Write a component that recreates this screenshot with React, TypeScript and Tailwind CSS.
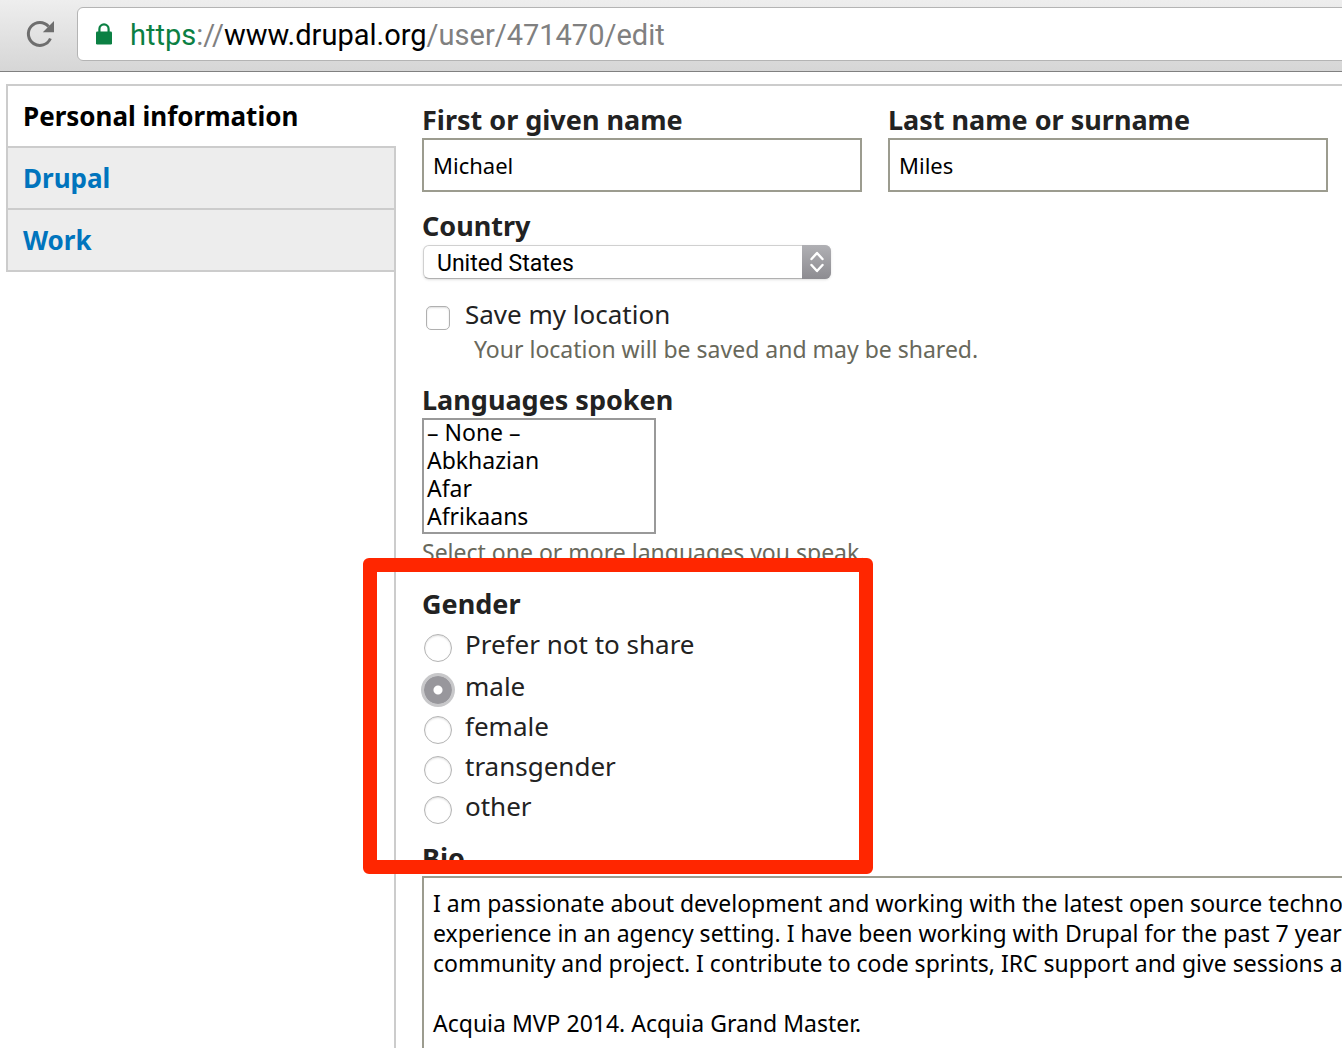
import type { ReactNode } from 'react';

const bio = `I am passionate about development and working with the latest open source technologies
experience in an agency setting. I have been working with Drupal for the past 7 years
community and project. I contribute to code sprints, IRC support and give sessions at

Acquia MVP 2014. Acquia Grand Master.`;

const genders = ['Prefer not to share', 'male', 'female', 'transgender', 'other'];

function Toolbar() {
  return (
    <header className="flex h-[72px] items-start overflow-hidden border-b border-[#808080] bg-linear-to-b from-[#eeeeee] to-[#d6d6d6] pt-[7px]">
      <button type="button" aria-label="Reload" className="ml-6 mt-3 h-8 w-8 shrink-0">
        <svg viewBox="0 0 32 32" className="h-8 w-8" fill="none">
          <path d="M26.400 19.500A11.500 11.500 0 1 1 24.600 7.400" stroke="#6e6e6e" strokeWidth="3" />
          <path d="M30 2v11.200H18.800z" fill="#6e6e6e" />
        </svg>
      </button>
      <div className="-mr-2 ml-[21px] flex h-[54px] flex-1 items-center rounded-md border border-[#b4b4b4] bg-white pl-[18px]">
        <svg viewBox="0 0 16 22" className="h-[22px] w-4 shrink-0" fill="none">
          <path d="M3.400 9.500V6a4.600 4.600 0 0 1 9.200 0v3.500" stroke="#0b8043" strokeWidth="2.200" />
          <rect y="8.500" width="16" height="13" rx="1.200" fill="#0b8043" />
        </svg>
        <a href="#url" className="ml-[18px] pt-0.5 font-['Roboto',sans-serif] text-[29px] leading-[52px] whitespace-nowrap text-[#808080]">
          <span className="text-[#0b8043]">https</span>://<span className="text-black">www.drupal.org</span>/user/471470/edit
        </a>
      </div>
    </header>
  );
}

function Tab({ active, children }: { active?: boolean; children: ReactNode }) {
  return (
    <a
      href="#tab"
      className={
        active
          ? 'block h-[62px] border-b-2 border-[#cccccc] bg-white pl-[15px] leading-[60px] text-black'
          : 'block h-[62px] border-r-2 border-b-2 border-[#cccccc] bg-[#ededed] pl-[15px] leading-[60px] text-[#0074bd]'
      }
    >
      {children}
    </a>
  );
}

function Label({ htmlFor, children }: { htmlFor: string; children: ReactNode }) {
  return (
    <label htmlFor={htmlFor} className="block pb-0.5 text-[27px] leading-8 font-bold">
      {children}
    </label>
  );
}

function TextField({ id, label, value }: { id: string; label: string; value: string }) {
  return (
    <div className="min-w-0">
      <Label htmlFor={id}>{label}</Label>
      <input id={id} type="text" defaultValue={value} className="block h-[54px] w-full border-2 border-[#9c9c8f] bg-white px-[9px] text-[22px] text-black outline-none" />
    </div>
  );
}

export default function App() {
  return (
    <div className="flex min-h-screen flex-col overflow-hidden bg-white font-['Noto_Sans',sans-serif] text-[#222222]">
      <Toolbar />
      <main className="mt-3 ml-1.5 flex flex-1 border-t-2 border-[#cccccc]">
        <nav className="z-10 -mr-0.5 w-[390px] shrink-0 self-start border-l-2 border-[#cccccc] text-[26px] font-bold">
          <Tab active>Personal information</Tab>
          <Tab>Drupal</Tab>
          <Tab>Work</Tab>
        </nav>
        <form className="flex min-w-0 flex-1 flex-col border-l-2 border-[#cccccc] pt-[18px] pl-[26px]">
          <div className="grid grid-cols-2 gap-[26px] pr-3.5">
            <TextField id="first" label="First or given name" value="Michael" />
            <TextField id="last" label="Last name or surname" value="Miles" />
          </div>

          <div className="mt-[18px]">
            <Label htmlFor="country">Country</Label>
            <div className="relative ml-px mt-px w-[408px]">
              <select id="country" className="block h-[34px] w-full appearance-none rounded-md border border-[#d0d0d0] border-b-[#b0b0b0] bg-white pt-0.5 pl-[13px] font-['Roboto',sans-serif] text-[23px] leading-8 text-black shadow-sm outline-none">
                <option>United States</option>
              </select>
              <span className="pointer-events-none absolute inset-y-0 right-0 flex w-[29px] items-center justify-center rounded-r-md bg-linear-to-b from-[#b0b0b4] to-[#8d8c91]">
                <svg viewBox="0 0 14 22" className="h-[22px] w-3.5" fill="none" stroke="#ffffff" strokeWidth="2.400" strokeLinecap="round" strokeLinejoin="round">
                  <path d="M1.500 8 7 2l5.500 6M1.500 14 7 20l5.500-6" />
                </svg>
              </span>
            </div>
          </div>

          <div className="mt-[18px] flex h-9">
            <input id="save" type="checkbox" className="mt-[9px] ml-1 h-6 w-6 shrink-0 appearance-none rounded-[5px] border border-[#b0b0b0] bg-white shadow-[inset_0_1px_2px_#dddddd] outline-none" />
            <label htmlFor="save" className="ml-[15px] text-[26px] leading-[34px]">Save my location</label>
          </div>
          <p className="pb-0.5 pl-[52px] text-[23px] leading-8 text-[#68685b]">Your location will be saved and may be shared.</p>

          <div className="mt-[17px]">
            <Label htmlFor="languages">Languages spoken</Label>
            <select id="languages" multiple size={4} className="block h-[116px] w-[234px] overflow-hidden rounded-none border-2 border-[#999999] bg-white p-0 text-[23px] text-black outline-none [scrollbar-width:none]">
              {['– None –', 'Abkhazian', 'Afar', 'Afrikaans'].map((name) => (
                <option key={name} className="flex h-7 min-h-7 items-center px-[3px] pt-0 pb-1 leading-6">{name}</option>
              ))}
            </select>
            <p className="mt-0.5 pb-0.5 text-[23px] leading-8 text-[#68685b]">Select one or more languages you speak.</p>
          </div>

          <fieldset className="relative mt-[18px]">
            <legend className="mb-[3px] block pb-0.5 text-[27px] leading-8 font-bold">Gender</legend>
            {genders.map((name) => (
              <div key={name} className="flex h-10 first-of-type:mb-0.5">
                {name === 'male' ? (
                  <input id={name} type="radio" name="gender" defaultChecked className="mt-[9px] ml-0.5 h-7 w-7 shrink-0 appearance-none rounded-full bg-[radial-gradient(circle,#ffffff_4px,#98979c_5px)] ring-3 ring-[#c8c8ca] outline-none" />
                ) : (
                  <input id={name} type="radio" name="gender" className="mt-[9px] ml-0.5 h-7 w-7 shrink-0 appearance-none rounded-full border border-[#b4b4b4] bg-white shadow-[inset_0_1px_2px_#dddddd] outline-none" />
                )}
                <label htmlFor={name} className="ml-[13px] text-[26px] leading-[38px]">{name}</label>
              </div>
            ))}
            <div className="pointer-events-none absolute -top-[67px] -left-[59px] h-[316px] w-[510px] rounded-md border-[14px] border-[#ff2600]" />
          </fieldset>

          <div className="mt-[15px] flex flex-1 flex-col">
            <Label htmlFor="bio">Bio</Label>
            <textarea id="bio" wrap="off" defaultValue={bio} className="-mr-1 block min-h-[172px] flex-1 resize-none overflow-hidden border-2 border-b-0 border-[#9c9c8f] bg-white px-[9px] pt-2.5 text-[23px] leading-[30px] text-black outline-none" />
          </div>
        </form>
      </main>
    </div>
  );
}
